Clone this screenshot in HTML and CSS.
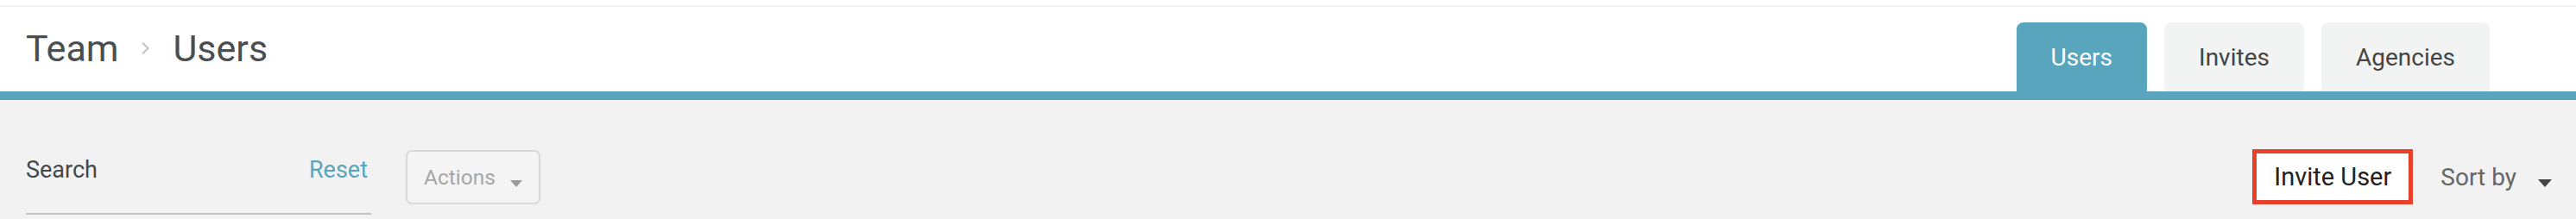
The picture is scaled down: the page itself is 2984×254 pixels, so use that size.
FILE: index.html
```html
<!DOCTYPE html>
<html lang="en">
<head>
  <meta charset="UTF-8">
  <meta name="viewport" content="width=device-width, initial-scale=1.0">
  <title>Team - Users</title>
  <link rel="stylesheet" href="styles.css">
</head>
<body>
  <div class="page">
    <div class="header">
      <div class="breadcrumb">
        <span>Team</span>
        <svg class="crumb-sep" width="11" height="16" viewBox="0 0 11 16">
          <path d="M2 1.5 L8.5 8 L2 14.5" fill="none" stroke="#c6c8c8" stroke-width="2.4"/>
        </svg>
        <span>Users</span>
      </div>

      <div class="tabs">
        <div class="tab active">Users</div>
        <div class="tab">Invites</div>
        <div class="tab">Agencies</div>
      </div>
    </div>

    <div class="bar"></div>

    <div class="toolbar">
      <div class="toolbar-left">
        <div class="search">
          <div class="search-head">
            <span class="search-label">Search</span>
            <span class="reset">Reset</span>
          </div>
          <div class="search-input"></div>
        </div>

        <div class="actions">
          <span>Actions</span>
          <span class="caret light"></span>
        </div>
      </div>

      <div class="toolbar-right">
        <div class="invite">Invite User</div>
        <div class="sort">
          <span>Sort by</span>
          <span class="caret dark"></span>
        </div>
      </div>
    </div>
  </div>
</body>
</html>
```

FILE: styles.css
```css
body {
  margin: 0;
  font-family: Roboto, 'Liberation Sans', sans-serif;
  background: #f2f2f2;
}

.page {
  padding-top: 6px;
  background: #fff;
}

.header {
  display: flex;
  justify-content: space-between;
  align-items: flex-end;
  height: 98px;
  padding: 0 100px 0 30px;
  border-top: 2px solid #f3f3f3;
}

.breadcrumb {
  align-self: flex-start;
  margin-top: 23px;
  display: flex;
  align-items: center;
  gap: 26px;
  font-size: 43px;
  color: #4a4e50;
}

.crumb-sep {
  display: block;
}

.tabs {
  display: flex;
  gap: 20px;
}

.tab {
  height: 80px;
  padding: 0 40px;
  display: flex;
  align-items: center;
  border-radius: 8px 8px 0 0;
  background: #f2f4f4;
  color: #444;
  font-size: 28px;
}

.tab.active {
  background: #58a5bd;
  color: #fff;
}

.bar {
  height: 10px;
  background: #58a5bd;
}

.toolbar {
  display: flex;
  justify-content: space-between;
  align-items: flex-start;
  height: 138px;
  padding: 0 28px 0 30px;
  background: #f2f2f2;
}

.toolbar-left {
  display: flex;
  align-items: flex-start;
  gap: 40px;
}

.search {
  width: 400px;
  padding-top: 65px;
}

.search-head {
  display: flex;
  justify-content: space-between;
  font-size: 27px;
}

.search-label {
  color: #454849;
}

.reset {
  color: #58a5bd;
  padding-right: 4px;
}

.search-input {
  height: 34px;
  border-bottom: 2px solid #c4c4c4;
}

.actions {
  margin-top: 58px;
  box-sizing: border-box;
  width: 156px;
  height: 63px;
  padding: 0 19px;
  display: flex;
  align-items: center;
  justify-content: space-between;
  border: 2px solid #d9d9d9;
  border-radius: 7px;
  background: #f4f4f4;
  color: #a6a6a6;
  font-size: 24.5px;
}

.caret {
  width: 0;
  height: 0;
  border-left: 7.5px solid transparent;
  border-right: 7.5px solid transparent;
  margin-top: 14px;
}

.caret.light {
  border-top: 8px solid #9c9c9c;
}

.caret.dark {
  border-left-width: 8.5px;
  border-right-width: 8.5px;
  border-top: 9px solid #444;
}

.toolbar-right {
  margin-top: 57px;
  display: flex;
  align-items: center;
  gap: 32px;
}

.invite {
  box-sizing: border-box;
  width: 186px;
  height: 64px;
  display: flex;
  align-items: center;
  justify-content: center;
  border: 5px solid #e8412b;
  background: #fff;
  color: #222;
  font-size: 29px;
}

.sort {
  display: flex;
  align-items: center;
  gap: 25px;
  color: #666;
  font-size: 28px;
}
```
